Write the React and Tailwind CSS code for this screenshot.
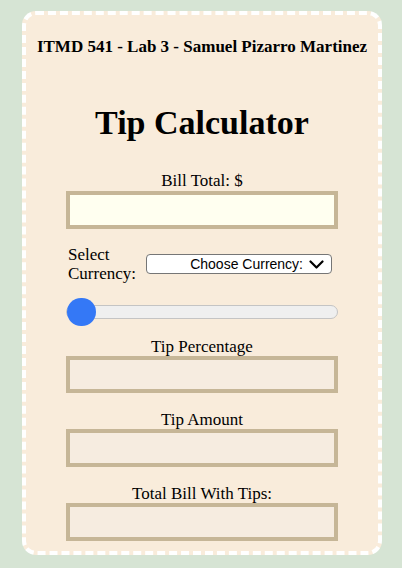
export default function App() {
  return (
    <div className="w-[402px] h-[568px] bg-[#d6e4d4] pt-[11px] overflow-hidden" style={{ fontFamily: '"Liberation Serif", "Times New Roman", serif' }}>
      <div className="ml-[22px] w-[360px] h-[544px] bg-[#f9ecdb] border-[4px] border-dashed border-white rounded-[14px] flex flex-col items-center text-black">
        <div className="mt-[22px] text-[17px] leading-[20px] font-bold whitespace-nowrap">ITMD 541 - Lab 3 - Samuel Pizarro Martinez</div>
        <div className="mt-[46px] text-[34px] leading-[39px] font-bold">Tip Calculator</div>
        <div className="mt-[29px] text-[17px] leading-[19px]">Bill Total: $</div>
        <div className="mt-[1px] w-[272px] h-[38px] border-[4px] border-[#c6b697] bg-[#fffff0]"></div>
        <div className="mt-[16px] w-[352px] pl-[42px] flex items-center">
          <div className="w-[78px] text-[17px] leading-[19px]">Select<br />Currency:</div>
          <div className="w-[186px] h-[20px] bg-white border border-[#767676] rounded-[4px] flex items-center justify-end pr-[7px] gap-[6px]" style={{ fontFamily: '"Liberation Sans", Arial, sans-serif' }}>
            <span className="text-[14px] leading-[16px] text-black">Choose Currency:</span>
            <svg width="15" height="9" viewBox="0 0 15 9"><path d="M1.5 1.5 L7.5 7.5 L13.5 1.5" fill="none" stroke="#000" strokeWidth="2.2" strokeLinecap="round" strokeLinejoin="round" /></svg>
          </div>
        </div>
        <div className="mt-[15px] w-[272px] h-[28px] relative flex items-center">
          <div className="w-full h-[14px] rounded-full bg-[#efefef] border border-[#c4c4c4]"></div>
          <div className="absolute left-[1px] top-0 w-[29px] h-[28px] rounded-full bg-[#3478f6]"></div>
        </div>
        <div className="mt-[11px] text-[17px] leading-[19px]">Tip Percentage</div>
        <div className="w-[272px] h-[37px] border-[4px] border-[#c6b697] bg-[#f6ece0]"></div>
        <div className="mt-[17px] text-[17px] leading-[19px]">Tip Amount</div>
        <div className="w-[272px] h-[38px] border-[4px] border-[#c6b697] bg-[#f6ece0]"></div>
        <div className="mt-[17px] text-[17px] leading-[19px]">Total Bill With Tips:</div>
        <div className="w-[272px] h-[38px] border-[4px] border-[#c6b697] bg-[#f6ece0]"></div>
      </div>
    </div>
  );
}
